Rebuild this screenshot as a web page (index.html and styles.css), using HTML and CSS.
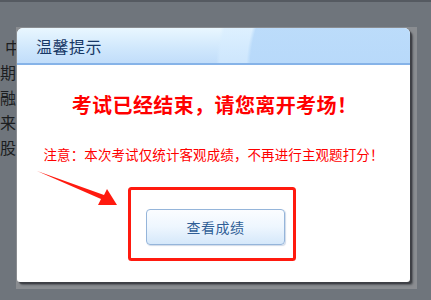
FILE: index.html
```html
<!DOCTYPE html>
<html lang="zh-CN">
<head>
<meta charset="utf-8">
<title>温馨提示</title>
<link rel="stylesheet" href="styles.css">
</head>
<body>
<div class="page">
  <div class="page-text">
    <p class="line first">中心</p>
    <p class="line">期末</p>
    <p class="line">融资</p>
    <p class="line">来源</p>
    <p class="line">股份</p>
  </div>
</div>
<div class="modal-frame">
  <div class="dialog">
    <div class="dialog-head">
      <span class="dialog-title">温馨提示</span>
    </div>
    <div class="dialog-body">
      <h1 class="notice-main">考试已经结束，请您离开考场！</h1>
      <p class="notice-sub">注意：本次考试仅统计客观成绩，不再进行主观题打分！</p>
      <button class="btn-score" type="button">查看成绩</button>
    </div>
  </div>
</div>
<svg class="annot" width="431" height="300" viewBox="0 0 431 300" aria-hidden="true">
  <polygon points="37,169 104,193 107,187 117,203 98,203 101,197" fill="#ff1a0f"/>
  <rect x="129.5" y="186.5" width="165" height="71" rx="2" ry="2" fill="none" stroke="#ff1a0f" stroke-width="3"/>
</svg>
</body>
</html>
```
FILE: styles.css
```css
html, body {
  margin: 0;
  padding: 0;
}
body {
  width: 431px;
  height: 300px;
  overflow: hidden;
  background: #6f757c;
  border-top: 2px solid #555a61;
  box-sizing: border-box;
  font-family: "Noto Sans CJK SC", "Noto Sans", sans-serif;
  position: relative;
}
.page {
  padding-top: 33px;
}
.page-text .line {
  margin: 0;
  font-size: 16px;
  line-height: 25px;
  color: #1c1e21;
  white-space: nowrap;
}
.page-text .line.first {
  padding-left: 5px;
}
.modal-frame {
  position: absolute;
  left: 16px;
  top: 25px;
  width: 401px;
  height: 262px;
  background: #8a8d91;
  padding: 1px 7px 7px 1px;
  box-sizing: border-box;
}
.dialog {
  width: 393px;
  height: 254px;
  background: #ffffff;
  border-radius: 6px 6px 3px 3px;
  box-shadow: 2px 2px 1px #3e4045, 3px 3px 2px #5a5d61;
  overflow: hidden;
  display: flex;
  flex-direction: column;
}
.dialog-head {
  height: 35px;
  border-bottom: 2px solid #86b3e8;
  background:
    radial-gradient(circle at 96% 120%, rgba(183,217,250,0.9) 0 38%, rgba(214,236,255,0.6) 39% 46%, rgba(255,255,255,0) 47%),
    linear-gradient(to bottom, #e9f7ff 0%, #cfe7fc 60%, #c1ddfa 100%);
  display: flex;
  align-items: center;
  padding-left: 19px;
  flex-shrink: 0;
}
.dialog-title {
  font-size: 16px;
  color: #173866;
  letter-spacing: 0.5px;
}
.dialog-body {
  display: flex;
  flex-direction: column;
  align-items: center;
  padding-top: 26px;
}
.notice-main {
  margin: 0 0 0 2px;
  font-size: 20px;
  line-height: 28px;
  font-weight: bold;
  color: #ff0000;
  letter-spacing: 0.4px;
  white-space: nowrap;
}
.notice-sub {
  margin: 25px 0 0;
  font-size: 13.5px;
  line-height: 20px;
  color: #ff0000;
  letter-spacing: 0.1px;
  white-space: nowrap;
}
.btn-score {
  margin: 45px 0 0 4px;
  width: 139px;
  height: 36px;
  border: 1px solid #95b5da;
  border-radius: 4px;
  background: linear-gradient(to bottom, #fbfdff 0%, #eef6fe 50%, #d5e8fa 100%);
  box-shadow: 1px 1px 1px rgba(120,150,190,0.35);
  font-family: "Noto Sans CJK SC", "Noto Sans", sans-serif;
  font-size: 14px;
  color: #2f5e96;
  letter-spacing: 0.5px;
  padding: 0;
}
.annot {
  position: absolute;
  left: 0;
  top: 0;
  pointer-events: none;
}
```
